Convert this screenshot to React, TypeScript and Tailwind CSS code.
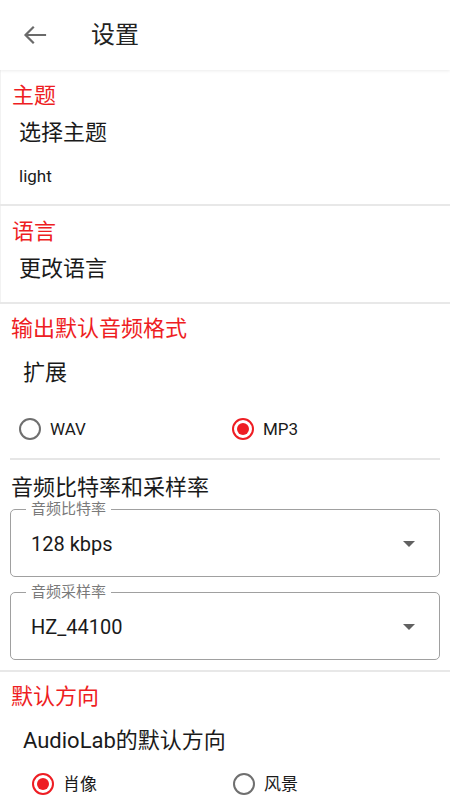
import React from "react";

const RED = "text-[#ee1d23]";

function Radio({ checked, label }: { checked: boolean; label: string }) {
  return (
    <div className="flex items-center">
      <div
        className={
          checked
            ? "w-[22px] h-[22px] rounded-full border-2 border-[#ee1d23] flex items-center justify-center"
            : "w-[22px] h-[22px] rounded-full border-2 border-[#6f6f6f]"
        }
      >
        {checked && <div className="w-[12px] h-[12px] rounded-full bg-[#ee1d23]" />}
      </div>
      <span className="ml-[9px] text-[17px] leading-[22px] text-[#1a1a1a]">{label}</span>
    </div>
  );
}

function Select({ label, value }: { label: string; value: string }) {
  return (
    <div className="relative h-[68px] mx-[10px] border border-[#a0a0a0] rounded-[5px] flex items-center pl-[20px] pr-[24px]">
      <span className="absolute left-[15px] top-[-11px] bg-white px-[5px] text-[15px] leading-[20px] text-[#7a7a7a]">
        {label}
      </span>
      <span className="flex-1 text-[20px] leading-[26px] text-[#1a1a1a] mt-[2px]">{value}</span>
      <svg width="12" height="6" viewBox="0 0 12 6" className="mt-[2px]">
        <path d="M0 0 L12 0 L6 6 Z" fill="#616161" />
      </svg>
    </div>
  );
}

export default function App() {
  return (
    <div
      className="w-[450px] h-[800px] overflow-hidden bg-white text-[#1a1a1a]"
      style={{ fontFamily: 'Roboto, "Noto Sans CJK SC", sans-serif' }}
    >
      {/* Header */}
      <div className="h-[70px] flex items-center bg-white shadow-[0_1px_3px_rgba(0,0,0,0.08)] relative z-10">
        <svg width="24" height="20" viewBox="0 0 24 20" className="ml-[23px]">
          <path
            d="M22 10 H3 M10 2.5 L2.5 10 L10 17.5"
            stroke="#6a6a6a"
            strokeWidth="2.2"
            fill="none"
            strokeLinecap="square"
          />
        </svg>
        <span className="ml-[44px] text-[24px] leading-[30px] text-[#222]">设置</span>
      </div>

      {/* 主题 */}
      <div className="pt-[12px] pb-[18px] border-l border-[#f2f2f2]">
        <div className={`pl-[11px] text-[22px] leading-[28px] ${RED}`}>主题</div>
        <div className="pl-[18px] mt-[9px] text-[22px] leading-[28px]">选择主题</div>
        <div className="pl-[18px] mt-[19px] text-[17px] leading-[20px]">light</div>
      </div>
      <div className="h-[2px] bg-[#e8e8e8]" />

      {/* 语言 */}
      <div className="pt-[12px] pb-[19px] border-l border-[#f2f2f2]">
        <div className={`pl-[11px] text-[22px] leading-[28px] ${RED}`}>语言</div>
        <div className="pl-[18px] mt-[9px] text-[22px] leading-[28px]">更改语言</div>
      </div>
      <div className="h-[2px] bg-[#e8e8e8]" />

      {/* 输出默认音频格式 */}
      <div className="pt-[11px] pb-[10px]">
        <div className={`pl-[11px] text-[22px] leading-[28px] ${RED}`}>输出默认音频格式</div>
        <div className="pl-[23px] mt-[16px] text-[22px] leading-[28px]">扩展</div>
        <div className="mt-[31px] flex pl-[19px]">
          <div className="w-[213px]">
            <Radio checked={false} label="WAV" />
          </div>
          <Radio checked={true} label="MP3" />
        </div>
        <div className="mt-[18px] mx-[10px] h-[2px] bg-[#e6e6e6]" />
        <div className="pl-[11px] mt-[14px] text-[22px] leading-[28px]">音频比特率和采样率</div>
        <div className="mt-[7px]">
          <Select label="音频比特率" value="128 kbps" />
        </div>
        <div className="mt-[15px]">
          <Select label="音频采样率" value="HZ_44100" />
        </div>
      </div>
      <div className="h-[2px] bg-[#e8e8e8]" />

      {/* 默认方向 */}
      <div className="pt-[11px]">
        <div className={`pl-[11px] text-[22px] leading-[28px] ${RED}`}>默认方向</div>
        <div className="pl-[23px] mt-[16px] text-[22px] leading-[28px]">AudioLab的默认方向</div>
        <div className="mt-[18px] flex pl-[32px]">
          <div className="w-[201px]">
            <Radio checked={true} label="肖像" />
          </div>
          <Radio checked={false} label="风景" />
        </div>
      </div>
    </div>
  );
}
